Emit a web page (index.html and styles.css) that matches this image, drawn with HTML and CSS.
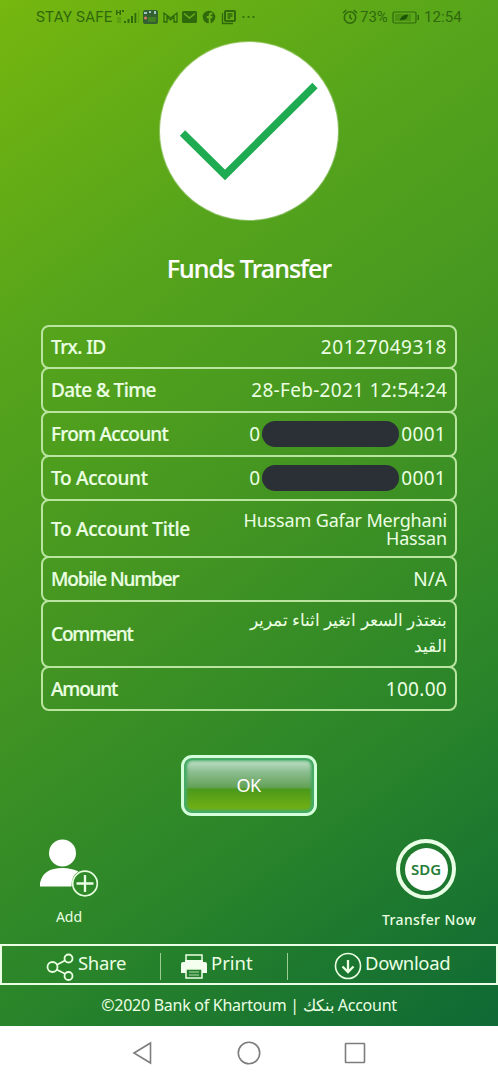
FILE: index.html
```html
<!DOCTYPE html>
<html lang="en">
<head>
<meta charset="utf-8">
<title>Funds Transfer</title>
<link rel="stylesheet" href="styles.css">
</head>
<body>
<div class="app">
  <header class="status">
    <span class="carrier">STAY SAFE</span>
    <svg class="signal" width="24" height="18" viewBox="0 0 24 18" fill="currentColor"><path d="M1 2h1.500v2h2V2H6v5H4.500V5h-2v2H1zM7 2h2v2H7zM9 13h2v2H9zM12.500 11h2v4h-2zM16 8h2v7h-2zM19.500 5h1.800v10h-1.800z"/><path d="M23 2h1v13h-1zM2 9h4v6H2z" opacity=".25"/></svg>
    <svg class="note" width="120" height="18" viewBox="0 0 120 18">
      <rect x="1" y="2" width="15" height="14" rx="2" fill="#345f30"/><path d="M2 4h3v2H2zM7 3h2v2H7zM12 3h2v3h-2z" fill="#9ac9c4"/><circle cx="3.500" cy="10" r="1.500" fill="#d97b68"/><path d="M6 9h8v5H6z" fill="#427f23"/>
      <path d="M22 14V5l6.500 5L35 5v9h-3V9l-3.500 3L25 9v5z" fill="none" stroke="currentColor" stroke-width="1.300"/>
      <rect x="40" y="3" width="15" height="12" rx="1.500" fill="currentColor"/><path d="m42 5.500 5.500 4.500L53 5.500" fill="none" stroke="#69ae18" stroke-width="1.500"/>
      <circle cx="67" cy="9" r="6.300" fill="currentColor"/><path d="M66.700 16V10.200h-2V8h2V6.700q0-2.200 2.300-2.200h1.500v2h-1q-.9 0-.9.900V8h1.900l-.3 2.200h-1.600V16z" fill="#69ae18"/>
      <rect x="83" y="3" width="10" height="10" rx="1" fill="none" stroke="currentColor" stroke-width="2"/><path d="M80.500 5v10.500H91M85.500 6h5M85.500 8h5M85.500 10h3" fill="none" stroke="currentColor" stroke-width="1.300"/>
      <g fill="currentColor"><circle cx="101.500" cy="9" r="1.100"/><circle cx="106.500" cy="9" r="1.100"/><circle cx="111.500" cy="9" r="1.100"/></g>
    </svg>
    <svg class="alarm" width="16" height="18" viewBox="0 0 16 18" fill="none" stroke="currentColor" stroke-width="1.600"><circle cx="8" cy="9.500" r="5.700"/><path d="M8 6.500v3.200l2 1.400M1 5l3.300-3M15 5l-3.300-3"/></svg>
    <span class="percent">73%</span>
    <svg class="battery" width="28" height="18" viewBox="0 0 28 18"><rect x="1" y="4" width="23" height="11" rx="1.500" fill="none" stroke="currentColor" stroke-width="1.200"/><path d="M3 6h16v7H3z" fill="currentColor" opacity=".35"/><path d="M8 13q0-6 8-6.500-.5 6-7 5.500z" fill="#1b5607"/><path d="M25.500 7h1.500v5h-1.500z" fill="currentColor"/></svg>
    <span class="clock">12:54</span>
  </header>

  <main class="main">
    <svg class="check" width="190" height="190" viewBox="0 0 190 190"><circle class="halo" cx="95" cy="95" r="90"/><circle cx="95" cy="95" r="89" fill="#fff"/><path d="m29.500 97 42.500 42 90-89.500" transform="translate(-1 0)" fill="none" stroke="#1eab51" stroke-width="7.500"/></svg>
    <h1 class="title">Funds Transfer</h1>

    <dl class="details">
      <div class="row first"><dt>Trx. ID</dt><dd class="trx">20127049318</dd></div>
      <div class="row"><dt>Date &amp; Time</dt><dd class="datetime">28-Feb-2021 12:54:24</dd></div>
      <div class="row"><dt class="snug">From Account</dt><dd class="account"><span>0</span><i class="mask"></i><span>0001</span></dd></div>
      <div class="row"><dt class="loose">To Account</dt><dd class="account"><span>0</span><i class="mask"></i><span>0001</span></dd></div>
      <div class="row name"><dt class="loose">To Account Title</dt><dd class="holder">Hussam Gafar Merghani<br>Hassan</dd></div>
      <div class="row"><dt class="tight">Mobile Number</dt><dd>N/A</dd></div>
      <div class="row comment"><dt class="tight">Comment</dt><dd class="arabic" lang="ar" dir="rtl">بنعتذر السعر اتغير اثناء تمرير<br>القيد</dd></div>
      <div class="row last"><dt class="tight">Amount</dt><dd class="sum">100.00</dd></div>
    </dl>

    <button class="ok">OK</button>

    <div class="actions">
      <div class="action add">
        <svg width="60" height="60" viewBox="0 0 60 60"><g fill="#fff"><circle cx="23.500" cy="14" r="13.500"/><path d="M1 47.500V44q3-15 22.500-15 9 0 16 3.500-7.500 4-7 15z"/></g><circle cx="46" cy="44.500" r="12.300" fill="#2f8929" stroke="#e6ffdf" stroke-width="1.700"/><path d="M46 36v17M37.500 44.500h17" stroke="#eaffe5" stroke-width="2.300"/></svg>
        <span>Add</span>
      </div>
      <div class="action transfer">
        <div class="coin"><b>SDG</b></div>
        <span>Transfer Now</span>
      </div>
    </div>
  </main>

  <nav class="toolbar">
    <a class="share"><svg width="30" height="30" viewBox="0 0 30 30" fill="none" stroke="currentColor" stroke-width="1.800"><circle cx="7.500" cy="15" r="5"/><circle cx="23.500" cy="6.500" r="4"/><circle cx="23.500" cy="24" r="4"/><path d="m12 12.800 8-4.300M12 17.800l8 4"/></svg><span>Share</span></a>
    <a class="print"><svg width="28" height="28" viewBox="0 0 28 28"><path d="M6 9V3h16v6" fill="none" stroke="currentColor" stroke-width="1.500"/><path d="M3 10h2V8h18v2h2q2 0 2 2v9H1v-9q0-2 2-2z" fill="#f4fff0"/><path d="M6 17h16v9H6z" fill="#247e2d" stroke="currentColor" stroke-width="1.500"/><path d="M9 20h10M9 23h10" stroke="#b1dcae" stroke-width="1.200"/></svg><span>Print</span></a>
    <a class="download"><svg width="28" height="28" viewBox="0 0 28 28" fill="none" stroke="currentColor"><circle cx="14" cy="14" r="12.500" stroke-width="1.600"/><path d="M14 8v12M8.500 14.500l5.500 5.500 5.500-5.500" stroke-width="2.300"/></svg><span>Download</span></a>
  </nav>
  <footer class="footer"><span>©2020 Bank of Khartoum | </span><bdi lang="ar">بنكك</bdi><span> Account</span></footer>
</div>
<div class="system">
  <svg width="22" height="24" viewBox="0 0 22 24"><path d="M3 12 19.500 2v20z"/></svg>
  <svg width="24" height="24" viewBox="0 0 24 24"><circle cx="12" cy="12" r="10.700"/></svg>
  <svg width="22" height="24" viewBox="0 0 22 24"><rect x="1.500" y="2.500" width="19" height="19" rx=".5"/></svg>
</div>
</body>
</html>
```
FILE: styles.css
```css
* { box-sizing: border-box; }
body { margin: 0; width: 498px; height: 1080px; overflow: hidden; background: #fff; font-family: "Noto Sans", "Open Sans", sans-serif; color: #ebffe3; }
.app { height: 1026px; display: flex; flex-direction: column; background: linear-gradient(145deg, #76b70f 0%, #57a51b 25%, #439522 50%, #2a852a 74%, #0e6935 100%); }
.status { height: 34px; display: flex; align-items: center; padding: 0 0 0 36px; color: #2f690c; font: 15px/18px Roboto, sans-serif; white-space: nowrap; }
.status svg { flex: none; }
.carrier { width: 78px; letter-spacing: .2px; }
.signal { margin-left: 1px; }
.note { margin-left: 3px; }
.alarm { margin-left: 80px; }
.percent { width: 29px; margin-left: 2px; }
.battery { margin-left: 3px; }
.clock { margin-left: 4px; letter-spacing: .1px; }
.main { flex: 1; }
.check { display: block; margin: 2px auto 0; }
.halo { fill: #ffffff55; }
.title { margin: 24px 0 0; height: 36px; line-height: 36px; font-size: 25px; font-weight: 500; text-align: center; color: #fff; letter-spacing: -.95px; -webkit-text-stroke: .2px #fff; }
.details { margin: 39px 0 0 41px; width: 416px; font-size: 19px; line-height: 24px; }
.row { height: 46px; margin-top: -2px; padding: 0 8px; display: flex; justify-content: space-between; align-items: center; border: 2px solid #b9e5a0; border-radius: 8px; }
.first { height: 44px; margin-top: 0; }
.name { height: 59px; }
.comment { height: 68px; }
.last { height: 45px; }
dt { font-weight: 500; letter-spacing: -.6px; -webkit-text-stroke: .2px #ebffe3; white-space: nowrap; }
.snug { letter-spacing: -.75px; }
.loose { letter-spacing: -.3px; }
.tight { letter-spacing: -1.15px; }
dd { margin: 0; text-align: right; white-space: nowrap; }
.trx { letter-spacing: .6px; }
.datetime { letter-spacing: .3px; margin-right: -.3px; }
.sum { letter-spacing: .3px; }
.account { display: flex; align-items: center; letter-spacing: .3px; padding-right: 1px; }
.mask { width: 137px; height: 26px; margin: 0 2px 0 2px; border-radius: 13px; background: #2b3036; }
.holder { font-size: 18px; line-height: 18px; letter-spacing: -.15px; }
.arabic { font-size: 16.8px; line-height: 26px; padding-bottom: 2px; }
.ok { display: block; margin: 44px auto 0; width: 136px; height: 61px; padding: 0 1px 2px 0; border: 3px solid #d5ffda; border-radius: 11px; box-shadow: inset 0 0 0 2px #45aa65, inset 0 0 3px 3px #45aa65; background: linear-gradient(#cae8d3 0, #8dbe92 25%, #65a257 53%, #4b991b 57%, #7bb511 100%); color: #fff; font: 18px "Noto Sans", sans-serif; letter-spacing: -.5px; }
.actions { display: flex; justify-content: space-between; padding: 23px 19px 0 31px; font-size: 14px; line-height: 18px; }
.action { display: flex; flex-direction: column; align-items: center; }
.add { width: 76px; }
.transfer { width: 100px; font-weight: 500; }
.add span { margin-top: 9px; }
.coin { display: grid; place-items: center; width: 60px; height: 60px; margin-right: 6px; border: 4px solid #e9ffe5; border-radius: 50%; }
.coin b { display: grid; place-items: center; width: 43px; height: 43px; border-radius: 50%; background: #fff; color: #267d35; font-size: 15px; font-weight: 600; }
.transfer span { margin-top: 12px; white-space: nowrap; letter-spacing: .4px; }
.toolbar { height: 41px; border: 2px solid #eaffe5; display: grid; grid-template-columns: 158px 127px 1fr; font-size: 18.5px; line-height: 24px; }
.toolbar a { display: flex; position: relative; }
.toolbar svg { flex: none; }
.share { padding-left: 43px; }
.print { padding-left: 20px; }
.download { padding-left: 47px; letter-spacing: -.35px; }
.print::before, .download::before { content: ""; position: absolute; left: 0; top: 7px; width: 1px; height: 27px; background: #9cce92; }
.toolbar svg { margin-top: 6px; }
.toolbar span { margin: 5px 0 0 3px; }
.share span { letter-spacing: -.3px; }
.footer { height: 41px; line-height: 40px; font-size: 16px; letter-spacing: -.27px; text-align: center; white-space: pre; }
.system { height: 54px; display: flex; align-items: center; padding-left: 131px; }
.system svg { fill: none; stroke: #7d7d7d; stroke-width: 1.600; }
.system svg:nth-child(2) { margin-left: 84px; }
.system svg:nth-child(3) { margin-left: 83px; }
```
